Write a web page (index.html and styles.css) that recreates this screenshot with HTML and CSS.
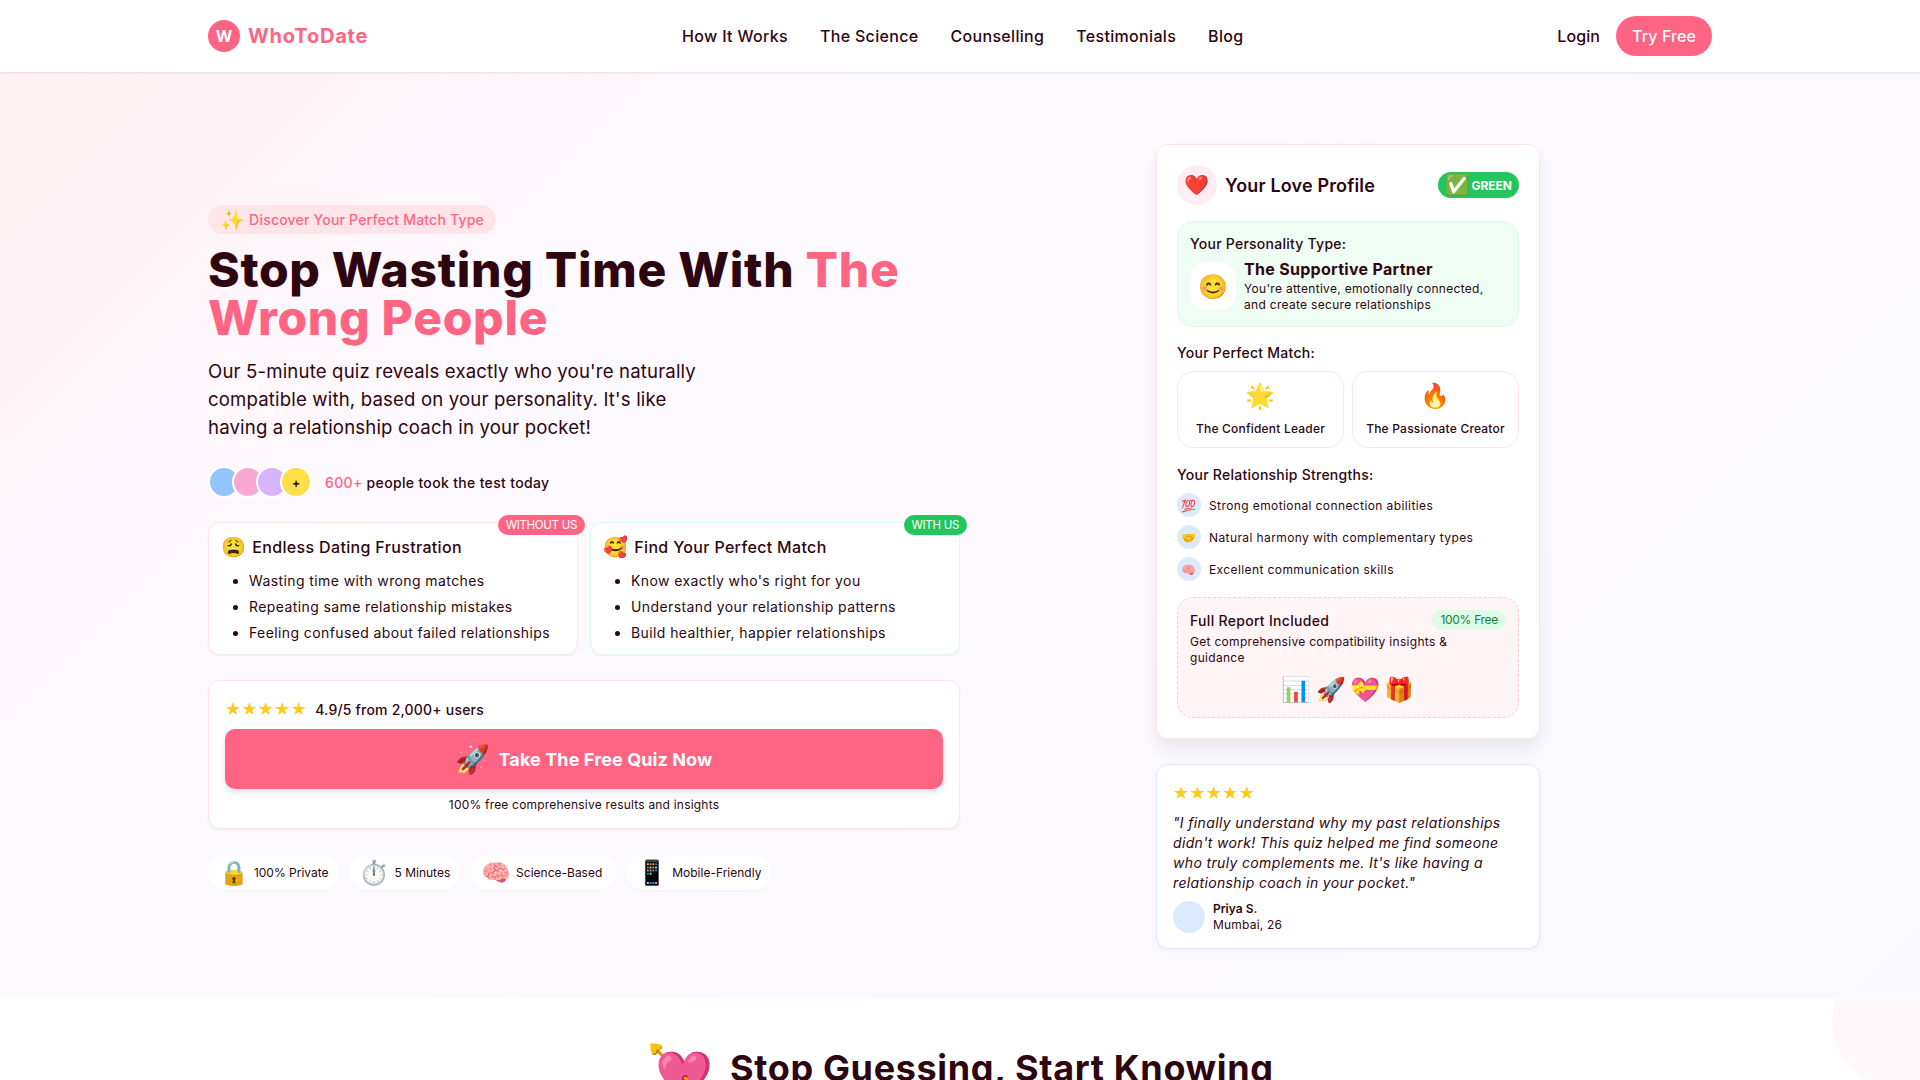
FILE: index.html
```html
<!DOCTYPE html>
<html>

<head>
    <title>WhoToDate - Discover Your Perfect Match Type</title>
    <meta charset="utf-8">
    <link rel="stylesheet" href="styles.css">
</head>

<body>
    <header class="nav">
        <a class="brand" href="#"><span class="brand-mark">W</span><span class="brand-name">WhoToDate</span></a>
        <nav class="nav-links">
            <a href="#">How It Works</a>
            <a href="#">The Science</a>
            <a href="#">Counselling</a>
            <a href="#">Testimonials</a>
            <a href="#">Blog</a>
        </nav>
        <div class="nav-actions">
            <a class="login" href="#">Login</a>
            <a class="try-btn" href="#">Try Free</a>
        </div>
    </header>

    <section class="hero">
        <div class="hero-left">
            <div class="tag"><span class="tag-emoji">✨</span> Discover Your Perfect Match Type</div>
            <h1 class="headline">Stop Wasting Time With <span class="coral">The Wrong People</span></h1>
            <p class="lead">Our 5-minute quiz reveals exactly who you're naturally compatible with, based on your personality. It's like having a relationship coach in your pocket!</p>

            <div class="social">
                <div class="avatars">
                    <span class="av av-blue"></span>
                    <span class="av av-pink"></span>
                    <span class="av av-purple"></span>
                    <span class="av av-yellow">+</span>
                </div>
                <p class="social-text"><span class="coral">600+</span> people took the test today</p>
            </div>

            <div class="compare">
                <div class="compare-card card-without">
                    <span class="compare-badge badge-without">WITHOUT US</span>
                    <h3 class="compare-title"><span class="compare-emoji">😩</span>Endless Dating Frustration</h3>
                    <ul class="compare-list">
                        <li>Wasting time with wrong matches</li>
                        <li>Repeating same relationship mistakes</li>
                        <li>Feeling confused about failed relationships</li>
                    </ul>
                </div>
                <div class="compare-card card-with">
                    <span class="compare-badge badge-with">WITH US</span>
                    <h3 class="compare-title"><span class="compare-emoji">🥰</span>Find Your Perfect Match</h3>
                    <ul class="compare-list">
                        <li>Know exactly who's right for you</li>
                        <li>Understand your relationship patterns</li>
                        <li>Build healthier, happier relationships</li>
                    </ul>
                </div>
            </div>

            <div class="cta-card">
                <div class="rating"><span class="stars">★★★★★</span><span class="rating-text">4.9/5 from 2,000+ users</span></div>
                <a class="cta-btn" href="#"><span class="cta-emoji">🚀</span>Take The Free Quiz Now</a>
                <p class="cta-note">100% free comprehensive results and insights</p>
            </div>

            <div class="trust">
                <div class="trust-item"><span class="trust-emoji">🔒</span>100% Private</div>
                <div class="trust-item"><span class="trust-emoji">⏱️</span>5 Minutes</div>
                <div class="trust-item trust-wide"><span class="trust-emoji">🧠</span>Science-Based</div>
                <div class="trust-item"><span class="trust-emoji">📱</span>Mobile-Friendly</div>
            </div>
        </div>

        <div class="hero-right">
            <div class="profile-card">
                <div class="profile-head">
                    <span class="heart-circle">❤️</span>
                    <h3 class="profile-title">Your Love Profile</h3>
                    <span class="green-badge"><span class="green-emoji">✅</span>GREEN</span>
                </div>

                <div class="type-box">
                    <p class="sub-title">Your Personality Type:</p>
                    <div class="type-row">
                        <span class="type-icon">😊</span>
                        <div>
                            <h4 class="type-name">The Supportive Partner</h4>
                            <p class="small-text">You're attentive, emotionally connected, and create secure relationships</p>
                        </div>
                    </div>
                </div>

                <p class="sub-title match-title">Your Perfect Match:</p>
                <div class="match-grid">
                    <div class="match-card"><span class="match-emoji">🌟</span><span class="match-name">The Confident Leader</span></div>
                    <div class="match-card"><span class="match-emoji">🔥</span><span class="match-name">The Passionate Creator</span></div>
                </div>

                <p class="sub-title strengths-title">Your Relationship Strengths:</p>
                <div class="strengths">
                    <div class="strength"><span class="strength-icon">💯</span>Strong emotional connection abilities</div>
                    <div class="strength"><span class="strength-icon">🤝</span>Natural harmony with complementary types</div>
                    <div class="strength"><span class="strength-icon">🧠</span>Excellent communication skills</div>
                </div>

                <div class="report">
                    <div class="report-head">
                        <h4 class="report-title">Full Report Included</h4>
                        <span class="free-badge">100% Free</span>
                    </div>
                    <p class="small-text report-text">Get comprehensive compatibility insights &amp; guidance</p>
                    <div class="report-emojis">📊 🚀 💝 🎁</div>
                </div>
            </div>

            <div class="review-card">
                <div class="stars">★★★★★</div>
                <p class="quote">"I finally understand why my past relationships didn't work! This quiz helped me find someone who truly complements me. It's like having a relationship coach in your pocket."</p>
                <div class="author">
                    <span class="author-pic"></span>
                    <div>
                        <p class="author-name">Priya S.</p>
                        <p class="author-place">Mumbai, 26</p>
                    </div>
                </div>
            </div>
        </div>
    </section>

    <section class="how">
        <span class="blob"></span>
        <h2 class="how-title"><span class="how-emoji">💘</span>Stop Guessing, Start Knowing</h2>
    </section>
</body>

</html>
```

FILE: styles.css
```css
* {
    box-sizing: border-box;
}

body {
    margin: 0;
    background-color: #ffffff;
    color: #2e0610;
    font-family: Inter, "Noto Sans", "Noto Color Emoji", sans-serif;
}

h1, h2, h3, h4, p, ul {
    margin: 0;
    padding: 0;
}

a {
    color: inherit;
    text-decoration: none;
}

.coral {
    color: #ff6583;
}

/* nav */
.nav {
    display: flex;
    align-items: center;
    justify-content: space-between;
    position: relative;
    z-index: 2;
    height: 72px;
    padding: 0 208px;
    background-color: #ffffff;
    box-shadow: 0 1px 3px rgba(0, 0, 0, 0.1);
}

.brand {
    display: flex;
    align-items: center;
    gap: 8px;
}

.brand-mark {
    display: flex;
    align-items: center;
    justify-content: center;
    width: 32px;
    height: 32px;
    border-radius: 50%;
    background-color: #ff6583;
    color: #ffffff;
    font-size: 16px;
    font-weight: 700;
}

.brand-name {
    color: #ff6583;
    font-size: 20px;
    font-weight: 700;
    letter-spacing: 0.8px;
}

.nav-links {
    display: flex;
    gap: 32px;
    font-size: 16px;
    font-weight: 500;
    letter-spacing: 0.32px;
}

.nav-actions {
    display: flex;
    align-items: center;
    gap: 16px;
    font-size: 16px;
    font-weight: 500;
    letter-spacing: 0.1px;
}

.try-btn {
    padding: 10px 16px;
    border-radius: 20px;
    background-color: #ff6583;
    color: #ffffff;
}

/* hero */
.hero {
    display: flex;
    align-items: center;
    gap: 196px;
    height: 926px;
    padding: 25px 208px 0;
    background: linear-gradient(135deg, #fff1f4 0%, #fdfaff 30%, #f9f8ff 100%);
}

.hero-left {
    width: 752px;
    flex-shrink: 0;
}

.hero-right {
    width: 384px;
    flex-shrink: 0;
    margin-bottom: 2px;
}

.tag {
    display: inline-flex;
    align-items: center;
    gap: 4px;
    height: 29px;
    padding: 0 12px;
    border-radius: 15px;
    background-color: #ffe5ea;
    color: #ff6583;
    font-size: 14px;
    font-weight: 500;
    letter-spacing: 0.2px;
}

.tag-emoji {
    font-size: 20px;
}

.headline {
    margin-top: 12px;
    font-size: 48px;
    line-height: 48px;
    font-weight: 800;
    letter-spacing: 0.7px;
}

.lead {
    max-width: 512px;
    margin-top: 15px;
    font-size: 18.6px;
    line-height: 28px;
    letter-spacing: 0.16px;
}

.social {
    display: flex;
    align-items: center;
    gap: 13px;
    margin-top: 25px;
}

.avatars {
    display: flex;
}

.av {
    display: flex;
    align-items: center;
    justify-content: center;
    width: 32px;
    height: 32px;
    margin-right: -8px;
    border: 2px solid #ffffff;
    border-radius: 50%;
    font-size: 12px;
    font-weight: 700;
}

.av-blue { background-color: #93c5fd; }
.av-pink { background-color: #f9a8d4; }
.av-purple { background-color: #d8b4fe; }
.av-yellow { background-color: #fde047; margin-right: 0; }

.social-text {
    font-size: 14px;
    font-weight: 500;
    letter-spacing: 0.33px;
}

.compare {
    display: flex;
    gap: 12px;
    margin-top: 24px;
}

.compare-card {
    position: relative;
    width: 370px;
    height: 133px;
    padding: 12px;
    border: 1px solid #ffe5ea;
    border-radius: 12px;
    background-color: #ffffff;
    box-shadow: 0 1px 2px rgba(0, 0, 0, 0.05);
}

.card-with {
    border-color: #dcfce7;
}

.compare-badge {
    position: absolute;
    top: -8px;
    right: -8px;
    padding: 0 8px;
    height: 20px;
    border-radius: 10px;
    color: #ffffff;
    font-size: 11.5px;
    letter-spacing: -0.3px;
    line-height: 20px;
}

.badge-without { background-color: #ff6583; }
.badge-with { background-color: #22c55e; }

.compare-title {
    display: flex;
    align-items: center;
    gap: 6px;
    height: 24px;
    font-size: 16px;
    font-weight: 500;
    letter-spacing: 0.34px;
}

.compare-emoji {
    font-size: 20px;
}

.compare-list {
    margin-top: 12px;
    padding-left: 28px;
    font-size: 14px;
    line-height: 20px;
    letter-spacing: 0.4px;
}

.compare-list li {
    margin-bottom: 6px;
}

.cta-card {
    margin-top: 25px;
    height: 149px;
    padding: 16px;
    border: 1px solid #ffe5ea;
    border-radius: 12px;
    background-color: #ffffff;
    box-shadow: 0 1px 2px rgba(0, 0, 0, 0.05);
}

.rating {
    display: flex;
    align-items: center;
    gap: 8px;
    height: 24px;
}

.stars {
    color: #facc15;
    font-size: 18px;
    line-height: 24px;
    letter-spacing: 0.3px;
    font-family: "DejaVu Sans", sans-serif;
}

.rating-text {
    font-size: 14px;
    font-weight: 500;
    letter-spacing: 0.2px;
}

.cta-btn {
    display: flex;
    align-items: center;
    justify-content: center;
    gap: 8px;
    height: 60px;
    margin-top: 8px;
    border-radius: 10px;
    background-color: #ff6583;
    color: #ffffff;
    font-size: 18px;
    font-weight: 700;
    letter-spacing: 0.1px;
    box-shadow: 0 4px 6px rgba(0, 0, 0, 0.1);
}

.cta-emoji {
    font-size: 28px;
}

.cta-note {
    margin-top: 8px;
    text-align: center;
    font-size: 12px;
    line-height: 16px;
    letter-spacing: 0.2px;
}

.trust {
    display: flex;
    gap: 10px;
    margin-top: 26px;
}

.trust-item {
    display: flex;
    align-items: center;
    gap: 5px;
    height: 35px;
    padding: 0 10px 0 11px;
    border-radius: 18px;
    background-color: #ffffff;
    box-shadow: 0 1px 2px rgba(0, 0, 0, 0.03);
    font-size: 12px;
}

.trust-wide {
    padding-right: 14px;
}

.trust-emoji {
    font-size: 24px;
}

/* right side */
.profile-card {
    padding: 20px;
    border: 1px solid #ffe5ea;
    border-radius: 12px;
    background-color: #ffffff;
    box-shadow: 0 10px 15px rgba(0, 0, 0, 0.07);
}

.profile-head {
    display: flex;
    align-items: center;
}

.heart-circle {
    display: flex;
    align-items: center;
    justify-content: center;
    width: 40px;
    height: 40px;
    margin-right: 8px;
    border-radius: 50%;
    background-color: #ffeef1;
    font-size: 20px;
}

.profile-title {
    flex: 1;
    font-size: 18px;
    font-weight: 600;
    letter-spacing: 0.15px;
}

.green-badge {
    display: flex;
    align-items: center;
    gap: 1px;
    height: 26px;
    padding: 0 7px;
    border-radius: 13px;
    background-color: #22c55e;
    color: #ffffff;
    font-size: 12px;
    font-weight: 700;
}

.green-emoji {
    font-size: 20px;
}

.type-box {
    height: 106px;
    margin-top: 16px;
    padding: 12px;
    border: 1px solid #dcfce7;
    border-radius: 16px;
    background-color: #f0fdf4;
}

.sub-title {
    font-size: 14px;
    line-height: 20px;
    font-weight: 500;
    letter-spacing: 0.25px;
}

.type-row {
    display: flex;
    gap: 8px;
    margin-top: 8px;
}

.type-icon {
    display: flex;
    align-items: center;
    justify-content: center;
    flex-shrink: 0;
    width: 46px;
    height: 48px;
    border-radius: 16px;
    background-color: #ffffff;
    font-size: 24px;
}

.type-name {
    font-size: 16px;
    line-height: 20px;
    font-weight: 700;
    letter-spacing: 0.3px;
    margin-top: -3px;
    margin-bottom: 2px;
}

.small-text {
    font-size: 12px;
    line-height: 16px;
    letter-spacing: 0.3px;
}

.match-title {
    margin-top: 16px;
}

.match-grid {
    display: grid;
    grid-template-columns: 1fr 1fr;
    gap: 8px;
    margin-top: 8px;
}

.match-card {
    display: flex;
    flex-direction: column;
    align-items: center;
    height: 77px;
    padding-top: 6px;
    border: 1px solid #ffe5ea;
    border-radius: 16px;
}

.match-emoji {
    font-size: 24px;
    line-height: 36px;
}

.match-name {
    margin-top: 7px;
    font-size: 12px;
    line-height: 16px;
    font-weight: 500;
    letter-spacing: 0.2px;
}

.strengths-title {
    margin-top: 17px;
}

.strengths {
    display: flex;
    flex-direction: column;
    gap: 8px;
    margin-top: 8px;
}

.strength {
    display: flex;
    align-items: center;
    gap: 8px;
    font-size: 12px;
    letter-spacing: 0.4px;
}

.strength-icon {
    display: flex;
    align-items: center;
    justify-content: center;
    width: 24px;
    height: 24px;
    border-radius: 50%;
    background-color: #dbeafe;
    font-size: 12px;
}

.report {
    height: 121px;
    margin-top: 16px;
    padding: 12px;
    border: 1px dashed #ffc9d3;
    border-radius: 16px;
    background-color: #fff5f7;
}

.report-head {
    display: flex;
    align-items: center;
    justify-content: space-between;
    height: 20px;
    margin-bottom: 4px;
}

.report-title {
    font-size: 14px;
    font-weight: 500;
    letter-spacing: 0.3px;
}

.free-badge {
    height: 20px;
    padding: 0 8px;
    border-radius: 10px;
    background-color: #dcfce7;
    color: #15803d;
    font-size: 12px;
    letter-spacing: -0.3px;
    line-height: 20px;
}

.report-text {
    max-width: 290px;
}

.report-emojis {
    margin-top: 8px;
    text-align: center;
    font-size: 24px;
    line-height: 32px;
    word-spacing: -2.5px;
}

.review-card {
    height: 185px;
    margin-top: 25px;
    padding: 16px;
    border: 1px solid #dbeafe;
    border-radius: 12px;
    background-color: #ffffff;
    box-shadow: 0 1px 2px rgba(0, 0, 0, 0.05);
}

.quote {
    margin-top: 8px;
    font-size: 14px;
    line-height: 20px;
    font-style: italic;
    letter-spacing: 0.35px;
}

.author {
    display: flex;
    align-items: center;
    gap: 8px;
    margin-top: 8px;
}

.author-pic {
    width: 32px;
    height: 32px;
    border-radius: 50%;
    background-color: #dbeafe;
}

.author-name {
    font-size: 12px;
    line-height: 16px;
    font-weight: 600;
}

.author-place {
    font-size: 12px;
    line-height: 16px;
    letter-spacing: 0.2px;
}

/* next section */
.how {
    position: relative;
    overflow: hidden;
    height: 400px;
    padding-top: 50px;
    background-color: #ffffff;
}

.blob {
    position: absolute;
    top: -40px;
    right: -40px;
    width: 128px;
    height: 128px;
    border-radius: 50%;
    background-color: #fff8fa;
}

.how-title {
    display: flex;
    align-items: center;
    justify-content: center;
    gap: 14px;
    font-size: 36px;
    line-height: 40px;
    font-weight: 700;
    letter-spacing: 0.65px;
}

.how-emoji {
    font-size: 56px;
    line-height: 40px;
    letter-spacing: 0;
    transform: translateY(5px);
}
```
